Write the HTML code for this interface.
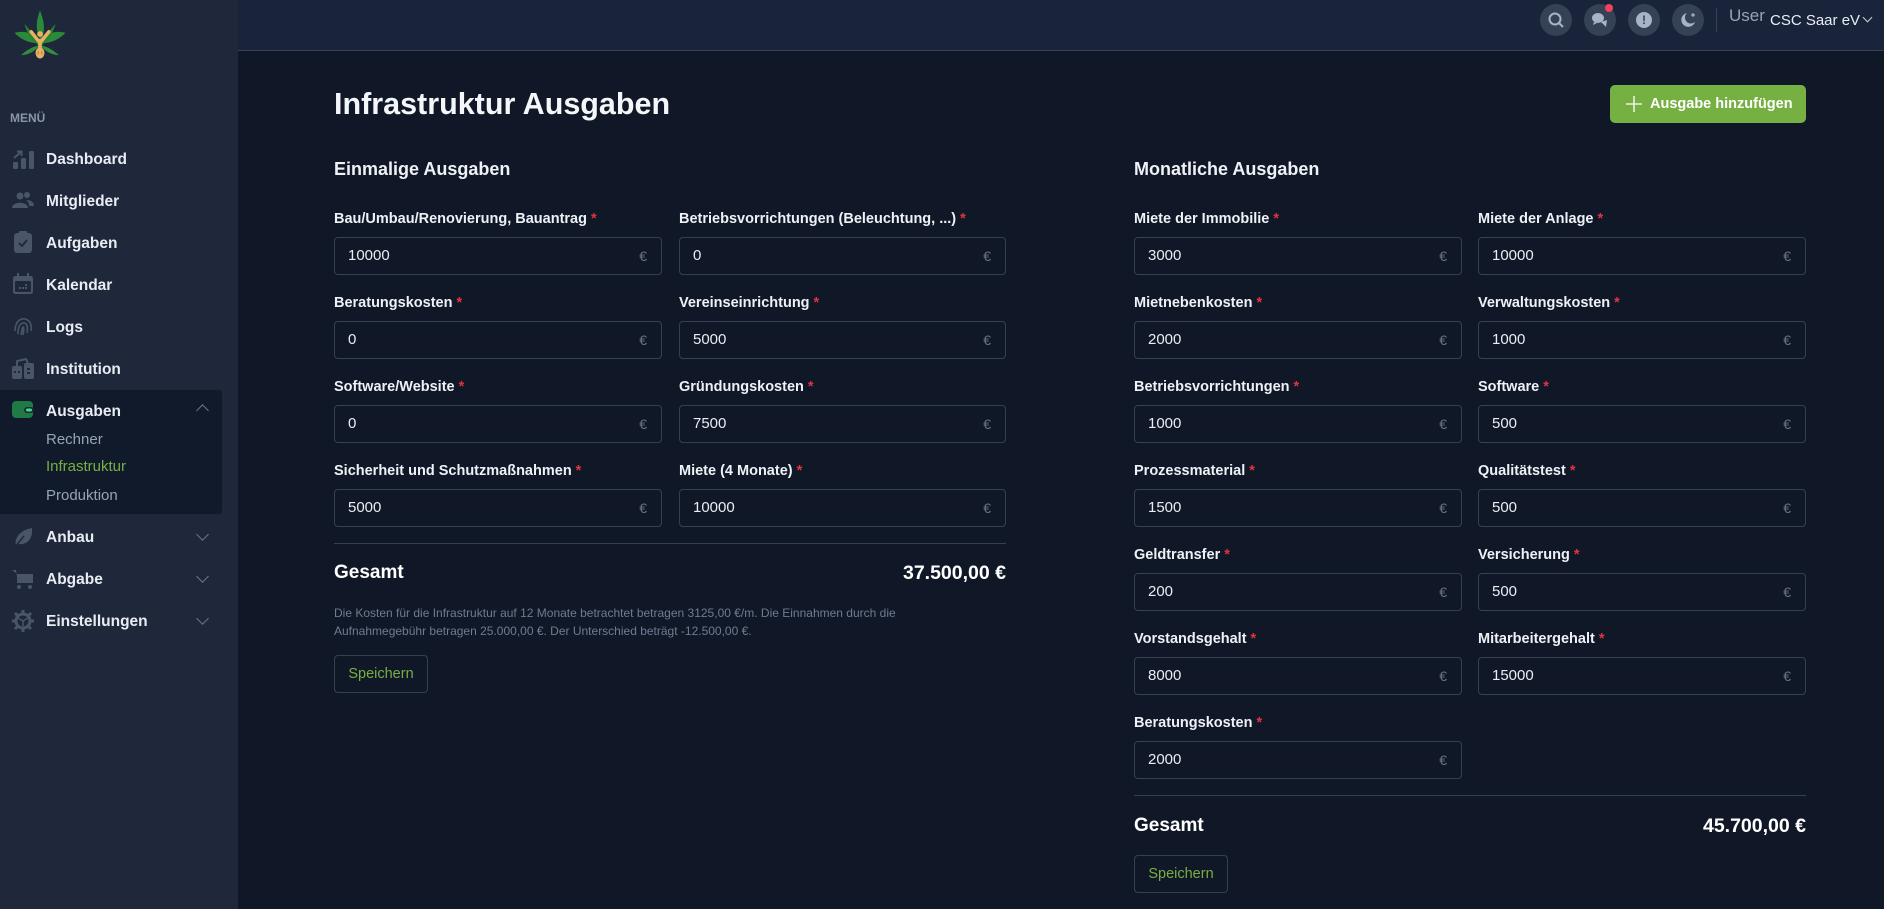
<!DOCTYPE html>
<html><head><meta charset="utf-8"><style>
*{box-sizing:border-box;margin:0;padding:0}
body{width:1884px;height:909px;overflow:hidden;background:#101828;font-family:"Liberation Sans",sans-serif;position:relative;color:#fff}
.a{position:absolute}
.side{left:0;top:0;width:238px;height:909px;background:#1e283a}
.hdr{left:238px;top:0;width:1646px;height:51px;background:#19233a;border-bottom:1px solid #364153}
.mi{position:absolute;left:46px;font-size:15.5px;font-weight:bold;color:#e9edf3;line-height:20px}
.ic{position:absolute;left:12px;width:22px;height:22px}
.chev{position:absolute;left:198px;width:9px;height:9px;border-right:1.6px solid #6b7587;border-bottom:1.6px solid #6b7587;transform:rotate(45deg)}
.sub{position:absolute;left:46px;font-size:15px;color:#97a3b6;line-height:20px}
.lbl{position:absolute;font-size:14.5px;font-weight:bold;color:#eef1f5;line-height:18px;white-space:nowrap}
.lbl b{color:#e0343e;margin-left:4px}
.inp{position:absolute;height:38px;border:1px solid #354052;border-radius:4px;font-size:15px;color:#e9edf3;line-height:36px;padding-left:13px}
.inp span{position:absolute;right:14px;top:0;color:#6b7587;font-size:14px}
.circ{position:absolute;top:4px;width:32px;height:32px;border-radius:50%;background:#354155}
</style></head><body>
<div class="a side"></div>
<div class="a hdr"></div>
<!-- logo -->
<svg class="a" style="left:10px;top:6px" width="60" height="56" viewBox="0 0 54 50">
<path d="M27 4 C31 14 32 22 28 32 C23 22 23 14 27 4Z" fill="#2a8a3a"/>
<path d="M4 24 C16 21 23 26 27 33 C18 34 10 30 4 24Z" fill="#2a8a3a"/>
<path d="M50 24 C38 21 31 26 27 33 C36 34 44 30 50 24Z" fill="#2a8a3a"/>
<path d="M10 44 C18 37 23 36 27 35 C22 41 16 44 10 44Z" fill="#2f8f3c"/>
<path d="M44 44 C36 37 31 36 27 35 C32 41 38 44 44 44Z" fill="#2f8f3c"/>
<path d="M13 16 C20 23 24 30 27 36 C20 32 16 26 13 16Z" fill="#267f35"/>
<path d="M41 16 C34 23 30 30 27 36 C34 32 38 26 41 16Z" fill="#267f35"/>
<path d="M19 23 L27 33 L35 23 M27 31 L27 44" stroke="#e8b062" stroke-width="3.2" fill="none" stroke-linecap="round"/>
<circle cx="27" cy="25" r="2.6" fill="#e8b062"/>
<ellipse cx="27" cy="42" rx="3" ry="4" fill="none" stroke="#e8b062" stroke-width="2"/>
</svg>
<div class="a" style="left:10px;top:111px;font-size:12px;font-weight:bold;color:#8a95a8">MENÜ</div>

<svg class="ic" style="top:148px" viewBox="0 0 22 22"><rect x="1" y="14" width="5" height="7" rx="1.5" fill="#4a5568"/><rect x="9" y="10" width="5" height="11" rx="1.5" fill="#4a5568"/><rect x="17" y="3" width="5" height="18" rx="1.5" fill="#4a5568"/><path d="M2 10 L9 4 M5 3.5 L9.5 3.5 L9.5 8" stroke="#4a5568" stroke-width="2" fill="none"/></svg>
<div class="mi" style="top:150px">Dashboard</div>
<svg class="ic" style="top:190px" viewBox="0 0 22 22"><circle cx="8" cy="6" r="3.5" fill="#4a5568"/><circle cx="15" cy="5" r="3" fill="#4a5568"/><path d="M0 18 C0 11 16 11 16 18 Z" fill="#4a5568"/><path d="M14 10 C20 10 22 13 22 16 L17 16 C17 13 16 11 14 10Z" fill="#4a5568"/></svg>
<div class="mi" style="top:192px">Mitglieder</div>
<svg class="ic" style="top:231px" viewBox="0 0 22 22"><rect x="2" y="2" width="18" height="20" rx="3" fill="#4a5568"/><rect x="7" y="0" width="8" height="4" rx="1" fill="#4a5568"/><path d="M7 12 L10 15 L15 9" stroke="#1e283a" stroke-width="1.8" fill="none"/></svg>
<div class="mi" style="top:234px">Aufgaben</div>
<svg class="ic" style="top:273px" viewBox="0 0 22 22"><rect x="1" y="3" width="20" height="18" rx="2.5" fill="#4a5568"/><rect x="3" y="8" width="16" height="11" rx="1" fill="#1e283a"/><rect x="5" y="0" width="2" height="5" fill="#4a5568"/><rect x="15" y="0" width="2" height="5" fill="#4a5568"/><g fill="#4a5568"><rect x="7" y="14" width="2" height="2"/><rect x="10" y="14" width="2" height="2"/><rect x="13" y="14" width="2" height="2"/><rect x="13" y="11" width="2" height="2"/></g></svg>
<div class="mi" style="top:276px">Kalendar</div>
<svg class="ic" style="top:315px" viewBox="0 0 22 22" fill="none" stroke="#4a5568" stroke-width="1.6"><path d="M3 16 C3 6 9 3 13 4 C18 5 20 10 19 16"/><path d="M6 19 C6 11 8 8 12 8 C15 8 16 12 15 18"/><path d="M9 20 C10 16 10 13 11 12 C12 12 12 16 11 20"/></svg>
<div class="mi" style="top:318px">Logs</div>
<svg class="ic" style="top:357px" viewBox="0 0 22 22"><rect x="0" y="9" width="10" height="13" rx="2" fill="#4a5568"/><rect x="12" y="6" width="10" height="16" rx="2" fill="#4a5568"/><path d="M5 9 L5 4 L14 2 L16 6" stroke="#4a5568" stroke-width="2" fill="none"/><g fill="#1e283a"><rect x="2" y="14" width="2" height="2"/><rect x="6" y="14" width="2" height="2"/><rect x="15" y="11" width="3" height="2"/><rect x="15" y="15" width="3" height="2"/></g></svg>
<div class="mi" style="top:360px">Institution</div>

<div class="a" style="left:0;top:390px;width:222px;height:124px;background:#111a2b;border-radius:0 3px 3px 0"></div>
<svg class="ic" style="top:398px;width:22px" viewBox="0 0 22 22"><rect x="0" y="3" width="21" height="17" rx="4" fill="#1f7a46"/><rect x="12" y="9" width="10" height="6" rx="3" fill="#1e283a"/><rect x="14" y="10.5" width="6" height="3" rx="1.5" fill="#3ddc84"/></svg>
<div class="mi" style="top:402px">Ausgaben</div>
<div class="chev" style="top:406px;transform:rotate(225deg)"></div>
<div class="sub" style="top:430px">Rechner</div>
<div class="sub" style="top:457px;color:#76b043">Infrastruktur</div>
<div class="sub" style="top:486px">Produktion</div>

<svg class="ic" style="top:526px" viewBox="0 0 22 22"><path d="M4 20 C2 12 8 4 20 2 C21 12 16 19 7 18 Z" fill="#4a5568"/><path d="M2 22 L12 10" stroke="#1e283a" stroke-width="1.5"/></svg>
<div class="mi" style="top:528px">Anbau</div>
<div class="chev" style="top:530px"></div>
<svg class="ic" style="top:568px" viewBox="0 0 22 22"><path d="M0 2 L4 2 L6 15 L19 15 L21 6 L5 6" fill="#4a5568"/><rect x="5" y="6" width="16" height="9" fill="#4a5568"/><circle cx="7" cy="19" r="2" fill="#4a5568"/><circle cx="18" cy="19" r="2" fill="#4a5568"/></svg>
<div class="mi" style="top:570px">Abgabe</div>
<div class="chev" style="top:572px"></div>
<svg class="ic" style="top:610px" viewBox="0 0 22 22"><circle cx="11" cy="11" r="7" fill="none" stroke="#4a5568" stroke-width="3"/><g stroke="#4a5568" stroke-width="3"><path d="M11 0 V4 M11 18 V22 M0 11 H4 M18 11 H22 M3 3 L6 6 M16 16 L19 19 M19 3 L16 6 M6 16 L3 19"/></g><path d="M11 11 L6 8 M11 11 L16 8 M11 11 V16" stroke="#4a5568" stroke-width="1.5"/></svg>
<div class="mi" style="top:612px">Einstellungen</div>
<div class="chev" style="top:614px"></div>

<div class="circ" style="left:1540px"></div>
<svg class="a" style="left:1547px;top:11px" width="18" height="18" viewBox="0 0 18 18"><circle cx="8" cy="8" r="5.5" fill="none" stroke="#a7b3c6" stroke-width="2"/><path d="M12 12 L16 16" stroke="#a7b3c6" stroke-width="2"/></svg>
<div class="circ" style="left:1584px"></div>
<svg class="a" style="left:1591px;top:11px" width="18" height="18" viewBox="0 0 18 18"><ellipse cx="7" cy="7" rx="6" ry="5" fill="#a7b3c6"/><path d="M3 11 L2 14 L6 12Z" fill="#a7b3c6"/><path d="M10 11 L16 9 L15 16 L12 13Z" fill="#a7b3c6"/></svg>
<div class="a" style="left:1605px;top:4px;width:8px;height:8px;border-radius:50%;background:#f43f5e"></div>
<div class="circ" style="left:1628px"></div>
<div class="a" style="left:1636px;top:12px;width:16px;height:16px;border-radius:50%;background:#a7b3c6;color:#354155;font-size:12px;font-weight:bold;text-align:center;line-height:16px">!</div>
<div class="circ" style="left:1672px"></div>
<svg class="a" style="left:1679px;top:11px" width="18" height="18" viewBox="0 0 18 18"><path d="M8 2 A7 7 0 1 0 16 11 A6 6 0 0 1 8 2Z" fill="#a7b3c6"/><path d="M14 2 V6 M12 4 H16" stroke="#a7b3c6" stroke-width="1.2"/></svg>
<div class="a" style="left:1716px;top:8px;width:1px;height:24px;background:#364153"></div>
<div class="a" style="left:1729px;top:6px;font-size:17px;color:#97a3b6">User</div>
<div class="a" style="left:1770px;top:12px;font-size:15px;color:#e9edf3">CSC Saar eV</div>
<div class="a" style="left:1864px;top:14px;width:7px;height:7px;border-right:1.4px solid #c7cfdb;border-bottom:1.4px solid #c7cfdb;transform:rotate(45deg)"></div>

<div class="a" style="left:334px;top:86px;font-size:30.5px;font-weight:bold;line-height:36px;color:#f4f6f9">Infrastruktur Ausgaben</div>
<div class="a" style="left:1610px;top:85px;width:196px;height:38px;background:#76b043;border-radius:5px;font-size:14.5px;font-weight:bold;line-height:38px;color:#fff;padding-left:40px">Ausgabe hinzufügen</div>
<svg class="a" style="left:1625px;top:95px" width="18" height="18"><path d="M9 1 V17 M1 9 H17" stroke="#e8f3dc" stroke-width="1.6"/></svg>

<div class="a" style="left:334px;top:159px;font-size:18px;font-weight:bold;color:#eef1f5">Einmalige Ausgaben</div>
<div class="a" style="left:1134px;top:159px;font-size:18px;font-weight:bold;color:#eef1f5">Monatliche Ausgaben</div>

<div class="lbl" style="left:334px;top:210px">Bau/Umbau/Renovierung, Bauantrag<b>*</b></div>
<div class="inp" style="left:334px;top:237px;width:328px">10000<span>€</span></div>
<div class="lbl" style="left:679px;top:210px">Betriebsvorrichtungen (Beleuchtung, ...)<b>*</b></div>
<div class="inp" style="left:679px;top:237px;width:327px">0<span>€</span></div>
<div class="lbl" style="left:334px;top:294px">Beratungskosten<b>*</b></div>
<div class="inp" style="left:334px;top:321px;width:328px">0<span>€</span></div>
<div class="lbl" style="left:679px;top:294px">Vereinseinrichtung<b>*</b></div>
<div class="inp" style="left:679px;top:321px;width:327px">5000<span>€</span></div>
<div class="lbl" style="left:334px;top:378px">Software/Website<b>*</b></div>
<div class="inp" style="left:334px;top:405px;width:328px">0<span>€</span></div>
<div class="lbl" style="left:679px;top:378px">Gründungskosten<b>*</b></div>
<div class="inp" style="left:679px;top:405px;width:327px">7500<span>€</span></div>
<div class="lbl" style="left:334px;top:462px">Sicherheit und Schutzmaßnahmen<b>*</b></div>
<div class="inp" style="left:334px;top:489px;width:328px">5000<span>€</span></div>
<div class="lbl" style="left:679px;top:462px">Miete (4 Monate)<b>*</b></div>
<div class="inp" style="left:679px;top:489px;width:327px">10000<span>€</span></div>
<div class="a" style="left:334px;top:543px;width:672px;height:1px;background:#354052"></div>
<div class="a" style="left:334px;top:562px;font-size:19px;font-weight:bold">Gesamt</div>
<div class="a" style="left:806px;top:562px;width:200px;text-align:right;font-size:19.5px;font-weight:bold">37.500,00 €</div>
<div class="a" style="left:334px;top:604px;width:640px;font-size:12px;line-height:18px;color:#6e7b91">Die Kosten für die Infrastruktur auf 12 Monate betrachtet betragen 3125,00 €/m. Die Einnahmen durch die Aufnahmegebühr betragen 25.000,00 €. Der Unterschied beträgt -12.500,00 €.</div>
<div class="a" style="left:334px;top:655px;width:94px;height:38px;border:1px solid #354052;border-radius:4px;font-size:14.5px;line-height:36px;text-align:center;color:#76b043">Speichern</div>

<div class="lbl" style="left:1134px;top:210px">Miete der Immobilie<b>*</b></div>
<div class="inp" style="left:1134px;top:237px;width:328px">3000<span>€</span></div>
<div class="lbl" style="left:1478px;top:210px">Miete der Anlage<b>*</b></div>
<div class="inp" style="left:1478px;top:237px;width:328px">10000<span>€</span></div>
<div class="lbl" style="left:1134px;top:294px">Mietnebenkosten<b>*</b></div>
<div class="inp" style="left:1134px;top:321px;width:328px">2000<span>€</span></div>
<div class="lbl" style="left:1478px;top:294px">Verwaltungskosten<b>*</b></div>
<div class="inp" style="left:1478px;top:321px;width:328px">1000<span>€</span></div>
<div class="lbl" style="left:1134px;top:378px">Betriebsvorrichtungen<b>*</b></div>
<div class="inp" style="left:1134px;top:405px;width:328px">1000<span>€</span></div>
<div class="lbl" style="left:1478px;top:378px">Software<b>*</b></div>
<div class="inp" style="left:1478px;top:405px;width:328px">500<span>€</span></div>
<div class="lbl" style="left:1134px;top:462px">Prozessmaterial<b>*</b></div>
<div class="inp" style="left:1134px;top:489px;width:328px">1500<span>€</span></div>
<div class="lbl" style="left:1478px;top:462px">Qualitätstest<b>*</b></div>
<div class="inp" style="left:1478px;top:489px;width:328px">500<span>€</span></div>
<div class="lbl" style="left:1134px;top:546px">Geldtransfer<b>*</b></div>
<div class="inp" style="left:1134px;top:573px;width:328px">200<span>€</span></div>
<div class="lbl" style="left:1478px;top:546px">Versicherung<b>*</b></div>
<div class="inp" style="left:1478px;top:573px;width:328px">500<span>€</span></div>
<div class="lbl" style="left:1134px;top:630px">Vorstandsgehalt<b>*</b></div>
<div class="inp" style="left:1134px;top:657px;width:328px">8000<span>€</span></div>
<div class="lbl" style="left:1478px;top:630px">Mitarbeitergehalt<b>*</b></div>
<div class="inp" style="left:1478px;top:657px;width:328px">15000<span>€</span></div>
<div class="lbl" style="left:1134px;top:714px">Beratungskosten<b>*</b></div>
<div class="inp" style="left:1134px;top:741px;width:328px">2000<span>€</span></div>
<div class="a" style="left:1134px;top:795px;width:672px;height:1px;background:#354052"></div>
<div class="a" style="left:1134px;top:815px;font-size:19px;font-weight:bold">Gesamt</div>
<div class="a" style="left:1606px;top:815px;width:200px;text-align:right;font-size:19.5px;font-weight:bold">45.700,00 €</div>
<div class="a" style="left:1134px;top:855px;width:94px;height:38px;border:1px solid #354052;border-radius:4px;font-size:14.5px;line-height:36px;text-align:center;color:#76b043">Speichern</div>
</body></html>
